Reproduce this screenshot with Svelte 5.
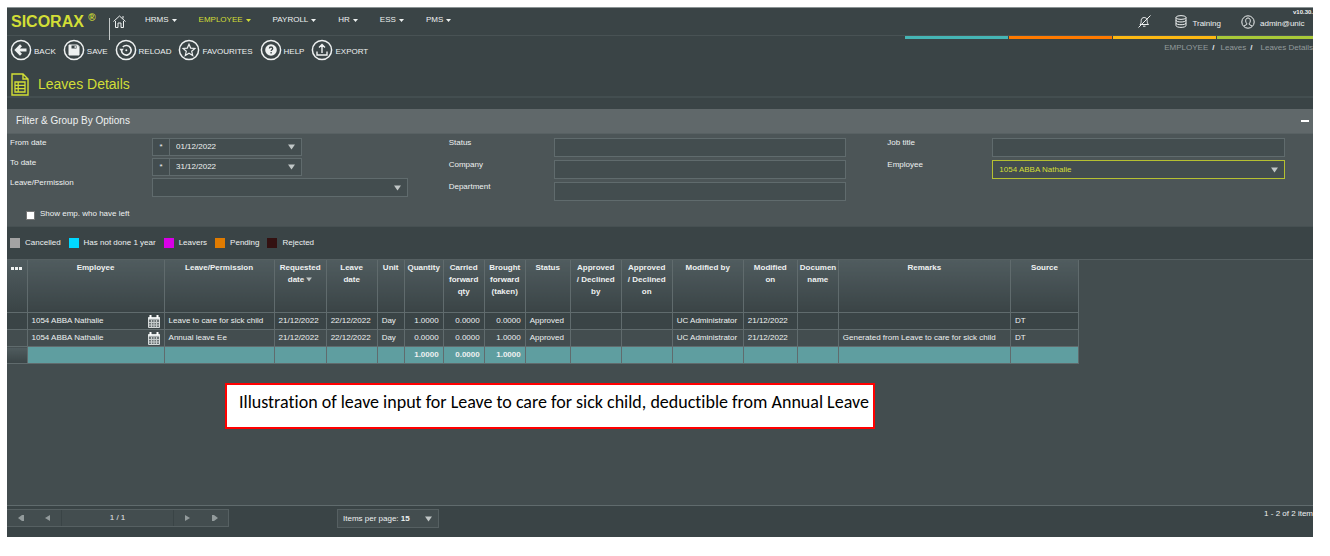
<script lang="ts">
	type Column = { title: string; width: number; align?: string; sorted?: boolean };

	const menus = ["HRMS", "EMPLOYEE", "PAYROLL", "HR", "ESS", "PMS"];
	const activeMenu = "EMPLOYEE";
	const stripes = ["#45b5b5", "#ff7a00", "#fdb913", "#a9c938"];

	const legend = [
		{ label: "Cancelled", color: "#a3a3a3" },
		{ label: "Has not done 1 year", color: "#00d8ff" },
		{ label: "Leavers", color: "#d800e6" },
		{ label: "Pending", color: "#e07b00" },
		{ label: "Rejected", color: "#331111" },
	];

	const columns: Column[] = [
		{ title: "Employee", width: 137 },
		{ title: "Leave/Permission", width: 110 },
		{ title: "Requested\ndate", width: 52, sorted: true },
		{ title: "Leave\ndate", width: 51 },
		{ title: "Unit", width: 27 },
		{ title: "Quantity", width: 39, align: "right" },
		{ title: "Carried\nforward\nqty", width: 41, align: "right" },
		{ title: "Brought\nforward\n(taken)", width: 41, align: "right" },
		{ title: "Status", width: 45 },
		{ title: "Approved\n/ Declined\nby", width: 51 },
		{ title: "Approved\n/ Declined\non", width: 51 },
		{ title: "Modified by", width: 71 },
		{ title: "Modified\non", width: 54 },
		{ title: "Documen\nname", width: 41 },
		{ title: "Remarks", width: 172 },
		{ title: "Source", width: 68 },
	];
	const tableWidth = columns.reduce((sum, c) => sum + c.width, 21);

	const rows = [
		["1054 ABBA Nathalie", "Leave to care for sick child", "21/12/2022", "22/12/2022", "Day", "1.0000", "0.0000", "0.0000", "Approved", "", "", "UC Administrator", "21/12/2022", "", "", "DT"],
		["1054 ABBA Nathalie", "Annual leave Ee", "21/12/2022", "22/12/2022", "Day", "0.0000", "0.0000", "1.0000", "Approved", "", "", "UC Administrator", "21/12/2022", "", "Generated from Leave to care for sick child", "DT"],
	];
	const totals = ["", "", "", "", "", "1.0000", "0.0000", "1.0000", "", "", "", "", "", "", "", ""];

	let fromDate = $state("01/12/2022");
	let toDate = $state("31/12/2022");
	let showLeft = $state(false);
	let filterOpen = $state(true);
</script>

{#snippet caret()}
	<svg class="caret" width="7" height="6" viewBox="0 0 7 6" aria-hidden="true"><path d="M0 0.5h7L3.5 5.5z" fill="currentColor" /></svg>
{/snippet}

{#snippet action(label: string, icon: string)}
	<button class="action">
		<svg width="22" height="22" viewBox="0 0 22 22" fill="none" stroke="currentColor" aria-hidden="true">
			<circle cx="11" cy="11" r="9.6" stroke-width="1.5" />
			{#if icon === "back"}
				<path d="M16.5 11H7M11 6.3L6.3 11l4.7 4.7" stroke-width="2.8" />
			{:else if icon === "save"}
				<path d="M6 6h8.5L16 7.5V16H6z" fill="currentColor" stroke-width="1" />
				<path d="M8.5 6.5h5v3h-5z" fill="#3a4446" stroke="none" />
				<path d="M11.6 7h1.2v2h-1.2z" fill="currentColor" stroke="none" />
			{:else if icon === "reload"}
				<path d="M6.5 11.5a4.8 4.8 0 1 0 1.3-3.5" stroke-width="1.6" />
				<path d="M4.3 9.7h4.600l-2.300 3.100z" fill="currentColor" stroke="none" />
				<circle cx="11.3" cy="11.3" r="1" fill="currentColor" stroke="none" />
			{:else if icon === "star"}
				<path d="M11 5.2l1.7 3.9 4.2.4-3.2 2.8 1 4.2L11 14.3l-3.7 2.2 1-4.2-3.2-2.8 4.2-.4z" stroke-width="1.2" />
			{:else if icon === "help"}
				<circle cx="11" cy="11" r="5.8" fill="currentColor" stroke="none" />
				<path d="M9.4 9.6c0-2.200 3.300-2.100 3.300-.1 0 1.200-1.600 1.200-1.600 2.500M11.100 13.100v1.300" stroke="#3a4446" stroke-width="1.3" />
			{:else}
				<path d="M11 14V5.800M8 8.600l3-3 3 3M6 12.500V16h10v-3.500" stroke-width="1.4" />
			{/if}
		</svg>
		<span>{label}</span>
	</button>
{/snippet}

{#snippet dateField(id: string)}
	<div class="box date">
		<span class="star">*</span>
		{#if id === "from-date"}
			<input {id} type="text" bind:value={fromDate} />
		{:else}
			<input {id} type="text" bind:value={toDate} />
		{/if}
		<button class="drop" aria-label="Open calendar">{@render caret()}</button>
	</div>
{/snippet}

<div class="app">
	<header class="navbar">
		<span class="brand">SICORAX <sup>®</sup></span>
		<span class="divider"></span>
		<a class="home" href="#home" aria-label="Home">
			<svg width="13" height="13" viewBox="0 0 13 13" fill="none" stroke="currentColor"><path d="M.5 6.500l6-5.500 6 5.500M2.500 6v6.500h2.500V8h3v4.500h2.500V6M10 3.500V1" /></svg>
		</a>
		<nav>
			{#each menus as menu}
				<a class:active={menu === activeMenu} href="#{menu.toLowerCase()}">
					{menu}
					<svg width="5" height="3" viewBox="0 0 5 3" aria-hidden="true"><path d="M0 0h5L2.500 3z" fill="currentColor" /></svg>
				</a>
			{/each}
		</nav>
		<div class="tools">
			<button class="bell" aria-label="Notifications">
				<svg width="13" height="13" viewBox="0 0 13 13" fill="none" stroke="currentColor"><path d="M2 9.500h8.500c-1.200-1-1.300-2.500-1.300-4 0-4-6-4-6 0 0 1.500 0 3-1.200 4zM5 11.200h2.500M12.500.5l-12 12" /></svg>
			</button>
			<button class="tool database">
				<svg width="12" height="13" viewBox="0 0 12 13" fill="none" stroke="currentColor"><ellipse cx="6" cy="2.500" rx="5" ry="1.900" /><path d="M1 2.500v8c0 2.500 10 2.500 10 0v-8M1 5.200c0 2.400 10 2.400 10 0M1 7.900c0 2.400 10 2.400 10 0" /></svg>
				<span>Training</span>
			</button>
			<button class="tool account">
				<svg width="14" height="14" viewBox="0 0 14 14" fill="none" stroke="currentColor"><circle cx="7" cy="7" r="6.200" /><path d="M7 3c-3 0-2.700 4.300-1.300 5.200v1.300L3 11M7 3c3 0 2.700 4.300 1.300 5.200v1.300L11 11" /></svg>
				<span>admin@unic</span>
			</button>
			<small>v10.30.</small>
		</div>
	</header>

	<div class="toolbar">
		<div class="actions">
			{@render action("BACK", "back")}
			{@render action("SAVE", "save")}
			{@render action("RELOAD", "reload")}
			{@render action("FAVOURITES", "star")}
			{@render action("HELP", "help")}
			{@render action("EXPORT", "export")}
		</div>
		<div class="where">
			<div class="stripes">
				{#each stripes as color}
					<span style="background: {color}"></span>
				{/each}
			</div>
			<div class="breadcrumb">
				<a href="#employee">EMPLOYEE</a><b>/</b><a class="crumb" href="#leaves">Leaves</a><b>/</b><span class="current">Leaves Details</span>
			</div>
		</div>
	</div>

	<div class="page-title">
		<svg width="18" height="23" viewBox="0 0 18 23" fill="none" stroke="currentColor" aria-hidden="true">
			<path d="M1 1h11l5 5v16H1zM12 1v5h5" stroke-width="1.4" />
			<path d="M4 9h10v10H4zM4 12.300h10M4 15.600h10M7.200 9v10" stroke-width="1.300" />
		</svg>
		<h1>Leaves Details</h1>
	</div>

	<section class="filter">
		<div class="filter-head">
			<h2>Filter &amp; Group By Options</h2>
			<button class="collapse" aria-label="Collapse" onclick={() => (filterOpen = !filterOpen)}><span></span></button>
		</div>
		{#if filterOpen}
			<div class="filter-body">
				<div class="fields first">
					<label for="from-date">From date</label>
					{@render dateField("from-date")}
					<label for="to-date">To date</label>
					{@render dateField("to-date")}
					<label for="permission">Leave/Permission</label>
					<div class="box">
						<select id="permission"><option></option></select>
						{@render caret()}
					</div>
				</div>
				<div class="fields">
					<label for="status">Status</label>
					<div class="box"><input id="status" type="text" /></div>
					<label for="company">Company</label>
					<div class="box"><input id="company" type="text" /></div>
					<label for="department">Department</label>
					<div class="box"><input id="department" type="text" /></div>
				</div>
				<div class="fields">
					<label for="job-title">Job title</label>
					<div class="box"><input id="job-title" type="text" /></div>
					<label for="employee">Employee</label>
					<div class="box selected">
						<select id="employee"><option>1054 ABBA Nathalie</option></select>
						{@render caret()}
					</div>
				</div>
				<label class="check"><input type="checkbox" bind:checked={showLeft} /> Show emp. who have left</label>
			</div>
		{/if}
	</section>

	<ul class="legend">
		{#each legend as item}
			<li><span style="background: {item.color}"></span>{item.label}</li>
		{/each}
	</ul>

	<main class="grid">
		<table style="width: {tableWidth}px">
			<colgroup>
				<col class="handle" />
				{#each columns as column}
					<col style="width: {column.width}px" />
				{/each}
			</colgroup>
			<thead>
				<tr>
					<th aria-label="Options"><svg width="11" height="3" viewBox="0 0 11 3"><path d="M0 0h3v3H0zM4 0h3v3H4zM8 0h3v3H8z" fill="currentColor" /></svg></th>
					{#each columns as column}
						<th>{column.title}{#if column.sorted}&nbsp;{@render caret()}{/if}</th>
					{/each}
				</tr>
			</thead>
			<tbody>
				{#each rows as row}
					<tr>
						<td></td>
						{#each row as cell, i}
							<td class:right={columns[i].align === "right"}>
								{#if i === 0}
									<div class="person">
										{cell}
										<svg width="14" height="13" viewBox="0 0 14 13" aria-hidden="true">
											<path d="M1.500 2.500h11v10h-11z" fill="#6b7375" stroke="#d5dada" />
											<path d="M1 3.500h12" stroke="#e6eaea" stroke-width="2" />
											<path d="M2 7.500h10M2 10h10M4.500 5v7.500M7 5v7.500M9.500 5v7.500" stroke="#c4caca" />
											<path d="M3.500 0v3M10.500 0v3" stroke="#fff" stroke-width="2" />
										</svg>
									</div>
								{:else}
									{cell}
								{/if}
							</td>
						{/each}
					</tr>
				{/each}
			</tbody>
			<tfoot>
				<tr>
					<td class="corner"></td>
					{#each totals as total}
						<td class="right">{total}</td>
					{/each}
				</tr>
			</tfoot>
		</table>
		<p class="note">Illustration of leave input for Leave to care for sick child, deductible from Annual Leave</p>
	</main>

	<footer>
		<div class="pager">
			<button aria-label="First page"><svg width="6" height="6" viewBox="0 0 6 6"><path d="M4 0v6L0 3zM4 0h2v6H4z" fill="currentColor" /></svg></button>
			<button aria-label="Previous page"><svg width="5" height="6" viewBox="0 0 5 6"><path d="M5 0v6L0 3z" fill="currentColor" /></svg></button>
			<span>1 / 1</span>
			<button aria-label="Next page"><svg width="5" height="6" viewBox="0 0 5 6"><path d="M0 0v6l5-3z" fill="currentColor" /></svg></button>
			<button aria-label="Last page"><svg width="6" height="6" viewBox="0 0 6 6"><path d="M2 0v6l4-3zM0 0h2v6H0z" fill="currentColor" /></svg></button>
		</div>
		<button class="page-size"><span>Items per page: <b>15</b></span>{@render caret()}</button>
		<div class="count">1 - 2 of 2 item</div>
	</footer>
</div>

<style>
	:global(body) {
		margin: 0;
		background: #fff;
	}

	.app {
		--dark: #3a4446;
		--mid: #434d4f;
		--line: #606b6d;
		--lime: #d2de36;
		margin: 7px 17px 0 7px;
		border-top: 1px solid #8b9394;
		background: var(--dark);
		color: #eef1f1;
		font: 8px/10px "Liberation Sans", Arial, sans-serif;
		overflow: hidden;
	}

	button,
	input,
	select {
		font: inherit;
		color: inherit;
		background: none;
		border: 0;
		border-radius: 0;
		padding: 0;
		margin: 0;
		min-width: 0;
		appearance: none;
		outline: 0;
	}

	a {
		color: inherit;
		text-decoration: none;
	}

	svg {
		flex: none;
	}

	.navbar {
		display: flex;
		align-items: center;
		height: 27px;
		border-bottom: 1px solid #485254;
	}

	.brand {
		width: 98px;
		padding-left: 4px;
		box-sizing: border-box;
		color: var(--lime);
		font-size: 16px;
		line-height: 27px;
		font-weight: bold;
		white-space: nowrap;
	}

	.brand sup {
		font-size: 10px;
		line-height: 1px;
	}

	.divider {
		align-self: flex-start;
		width: 1px;
		height: 22px;
		margin: 10px 3px 0 4px;
		background: #c3c8c8;
	}

	.home {
		display: flex;
		margin-right: 19px;
	}

	nav {
		display: flex;
		gap: 22px;
		padding-bottom: 3px;
	}

	nav a {
		display: flex;
		align-items: center;
		gap: 3px;
	}

	nav .active {
		color: var(--lime);
	}

	.tools {
		position: relative;
		display: flex;
		align-self: stretch;
		align-items: center;
		margin-left: auto;
	}

	.bell {
		display: flex;
		margin-right: 24px;
	}

	.tool {
		display: flex;
		align-items: center;
		gap: 5px;
	}

	.tool span {
		padding-top: 5px;
	}

	.database {
		margin-right: 20px;
	}

	.account {
		width: 72px;
	}

	small {
		position: absolute;
		top: 1px;
		right: 0;
		font-size: 6px;
		line-height: 7px;
		font-weight: bold;
	}

	.toolbar {
		display: flex;
		justify-content: space-between;
		height: 36px;
	}

	.actions {
		display: flex;
		align-items: flex-start;
		gap: 7px;
		padding: 3px 0 0 3px;
	}

	.action {
		display: flex;
		align-items: center;
		gap: 2px;
	}

	.action span {
		padding-top: 4px;
	}

	.where {
		width: 408px;
	}

	.stripes {
		display: flex;
		gap: 1px;
	}

	.stripes span {
		flex: 0 1 103px;
		height: 3px;
	}

	.stripes span:last-child {
		flex-basis: 96px;
	}

	.breadcrumb {
		display: flex;
		justify-content: flex-end;
		gap: 4px;
		padding-top: 4px;
		color: #939b9c;
	}

	.breadcrumb b {
		color: #e6eaea;
	}

	.crumb {
		padding-left: 2px;
	}

	.current {
		padding-left: 4px;
	}

	.page-title {
		display: flex;
		align-items: center;
		gap: 9px;
		height: 24px;
		padding-left: 4px;
		border-bottom: 2px solid #434e50;
		color: var(--lime);
	}

	h1,
	h2 {
		margin: 0;
		font-weight: normal;
	}

	h1 {
		font-size: 14px;
		line-height: 16px;
	}

	.filter {
		margin-top: 11px;
		background: #4c5557;
		border-bottom: 1px solid #465052;
	}

	.filter-head {
		display: flex;
		align-items: center;
		justify-content: space-between;
		height: 24px;
		padding: 0 4px 0 9px;
		background: #60686a;
		border-bottom: 1px solid #586163;
	}

	h2 {
		font-size: 10px;
		line-height: 12px;
	}

	.collapse {
		display: flex;
		height: 12px;
		align-items: center;
	}

	.collapse span {
		width: 8px;
		height: 2px;
		background: #fff;
	}

	.filter-body {
		display: grid;
		grid-template-columns: repeat(3, 1fr);
		column-gap: 41px;
		padding: 4px 28px 6px 3px;
	}

	.fields {
		display: grid;
		grid-template-columns: 105px 1fr;
		grid-auto-rows: 19px;
		row-gap: 3px;
	}

	.fields.first {
		grid-template-columns: 142px 1fr;
		grid-template-rows: 18px 18px 19px;
		row-gap: 2px;
	}

	.box {
		display: flex;
		align-items: center;
		box-sizing: border-box;
		border: 1px solid var(--line);
		background: #434d4f;
		padding-right: 6px;
	}

	.box input,
	.box select {
		flex: 1;
		align-self: stretch;
		padding-left: 6px;
	}

	.box.date {
		width: 150px;
	}

	.selected {
		border-color: #b5c031;
		color: var(--lime);
	}

	.caret {
		color: #c0c6c6;
	}

	.star {
		width: 16px;
		line-height: 16px;
		text-align: center;
		border-right: 1px solid var(--line);
	}

	.drop {
		display: flex;
	}

	.check {
		display: flex;
		align-items: center;
		gap: 5px;
		margin: 7px 0 0 16px;
	}

	.check input {
		width: 9px;
		height: 9px;
		margin-top: 3px;
		background: #fff;
		border: 1px solid #767676;
	}

	.check input:checked {
		background: #45b5b5;
	}

	.legend {
		display: flex;
		align-items: center;
		gap: 8px;
		height: 32px;
		margin: 0;
		padding: 0 3px;
		list-style: none;
	}

	.legend li {
		display: flex;
		align-items: center;
		gap: 5px;
	}

	.legend span {
		width: 10px;
		height: 10px;
	}

	.grid {
		min-height: 245px;
		border-top: 1px solid #566062;
		background: var(--mid);
	}

	table {
		table-layout: fixed;
		border-collapse: collapse;
	}

	.handle {
		width: 20px;
	}

	th,
	td {
		border: 1px solid var(--line);
		overflow: hidden;
	}

	th:first-child,
	td:first-child {
		border-left: 0;
	}

	th {
		height: 48px;
		padding: 2px 2px;
		border-top: 0;
		line-height: 12px;
		vertical-align: top;
		white-space: pre;
		background: linear-gradient(#505c5f, var(--dark));
	}

	th .caret {
		width: 6px;
		height: 5px;
	}

	td {
		height: 16px;
		padding: 0 4px;
		white-space: nowrap;
		background: var(--dark);
	}

	tbody tr:nth-child(2) td {
		background: var(--mid);
	}

	.right {
		text-align: right;
	}

	.person {
		display: flex;
		align-items: center;
		justify-content: space-between;
		margin-right: -1px;
	}

	tfoot td {
		background: #5f9ea0;
		font-weight: bold;
	}

	tfoot .corner {
		background: linear-gradient(#505c5f, var(--dark));
	}

	.note {
		width: fit-content;
		margin: 19px 0 0 218px;
		padding: 7px 4px 15px 12px;
		border: 2px solid #f00;
		background: #fff;
		color: #000;
		font: 18px/20px Carlito, Lato, sans-serif;
		font-variant-ligatures: none;
		white-space: nowrap;
	}

	footer {
		display: flex;
		align-items: flex-start;
		height: 28px;
		padding-top: 3px;
		border-top: 1px solid var(--line);
	}

	.pager {
		display: flex;
		border: 1px solid #566062;
		border-left: 0;
		background: var(--mid);
		line-height: 16px;
		color: #939b9c;
	}

	.pager button {
		width: 27px;
		display: flex;
		align-items: center;
		justify-content: center;
	}

	.pager span {
		width: 111px;
		border: solid var(--dark);
		border-width: 0 1px;
		color: #e6eaea;
		text-align: center;
	}

	.page-size {
		display: flex;
		align-items: center;
		justify-content: space-between;
		width: 102px;
		height: 19px;
		margin-left: 108px;
		padding: 0 6px 0 5px;
		border: 1px solid #566062;
		background: var(--mid);
	}

	.count {
		margin-left: auto;
		white-space: nowrap;
	}
</style>
